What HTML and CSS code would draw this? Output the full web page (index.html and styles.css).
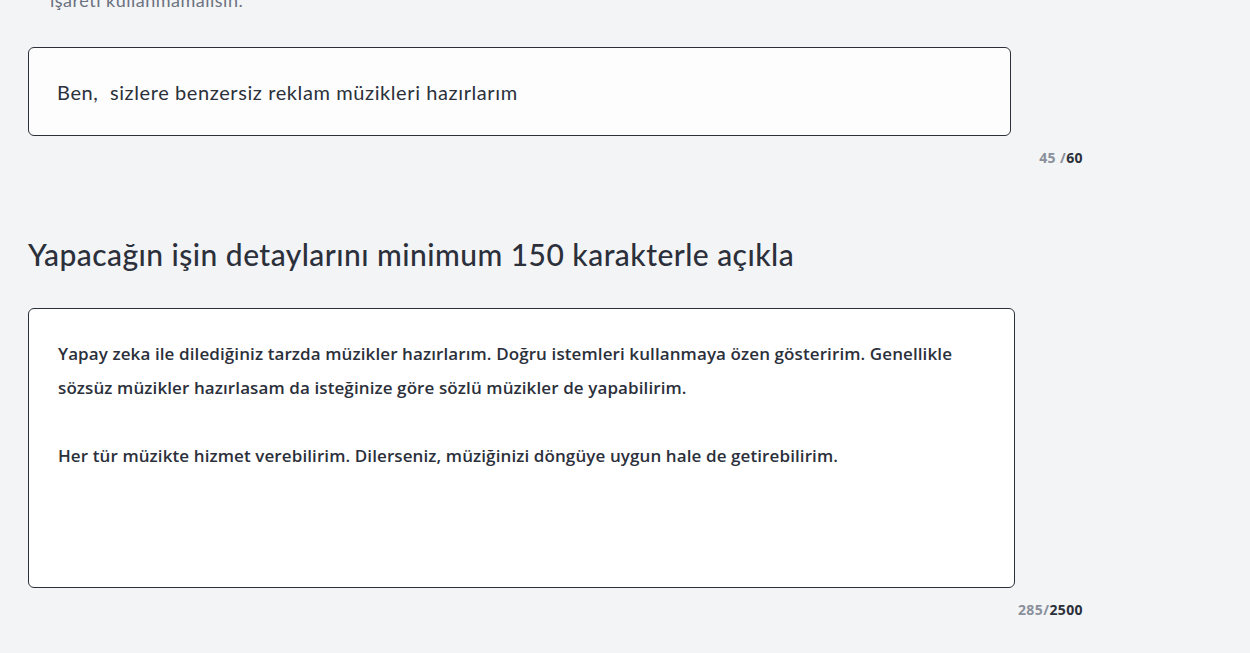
FILE: index.html
```html
<!DOCTYPE html>
<html>
	<head>
		<meta charset="utf-8" />
		<title>İlan oluştur</title>
		<link rel="stylesheet" href="styles.css">
	</head>
	<body>
		<div class="page">
			<ul class="hints">
				<li>işareti kullanmamalısın.</li>
			</ul>
			<div class="field">
				<div class="input">Ben,&nbsp; sizlere benzersiz reklam müzikleri hazırlarım</div>
				<div class="counter"><span class="used">45 /</span>60</div>
			</div>
			<h2 class="title">Yapacağın işin detaylarını minimum 150 karakterle açıkla</h2>
			<div class="field">
				<div class="textarea">
					<p>Yapay zeka ile dilediğiniz tarzda müzikler hazırlarım. Doğru istemleri kullanmaya özen gösteririm. Genellikle sözsüz müzikler hazırlasam da isteğinize göre sözlü müzikler de yapabilirim.</p>
					<p class="gap">Her tür müzikte hizmet verebilirim. Dilerseniz, müziğinizi döngüye uygun hale de getirebilirim.</p>
				</div>
				<div class="counter"><span class="used">285/</span>2500</div>
			</div>
		</div>
	</body>
</html>
```

FILE: styles.css
```css
* {
	padding: 0;
	margin: 0;
	box-sizing: border-box;
}
body {
	background-color: #f3f4f6;
	color: #2b303b;
	font-family: Lato, "Noto Sans", sans-serif;
	overflow: hidden;
}
.page {
	width: 1083px;
	padding-left: 28px;
}
.hints {
	list-style: none;
	margin-top: -12px;
	padding-left: 22px;
	font-size: 18px;
	line-height: 24px;
	letter-spacing: 0.5px;
	color: #6b7280;
}
.field {
	display: flex;
	flex-direction: column;
}
.input {
	display: flex;
	align-items: center;
	margin-top: 35px;
	width: 983px;
	height: 89px;
	padding: 0 28px;
	background-color: #fdfdfd;
	border: 1px solid #2b303b;
	border-radius: 6px;
	font-size: 20px;
	letter-spacing: 0.6px;
}
.counter {
	align-self: flex-end;
	margin-top: 12px;
	font-family: "Open Sans", sans-serif;
	font-size: 14px;
	font-weight: bold;
	letter-spacing: 0.4px;
	color: #2b303b;
}
.counter .used {
	color: #8a909b;
}
.title {
	margin-top: 67px;
	font-size: 30px;
	font-weight: 500;
	line-height: 40px;
	letter-spacing: 0.45px;
	color: #2b303b;
}
.textarea {
	margin-top: 34px;
	width: 987px;
	height: 280px;
	padding: 28px 29px;
	background-color: #ffffff;
	border: 1px solid #2b303b;
	border-radius: 6px;
	font-family: "Open Sans", sans-serif;
	font-size: 17px;
	font-weight: 600;
	line-height: 34px;
	letter-spacing: 0.1px;
}
.textarea .gap {
	margin-top: 34px;
}
```
